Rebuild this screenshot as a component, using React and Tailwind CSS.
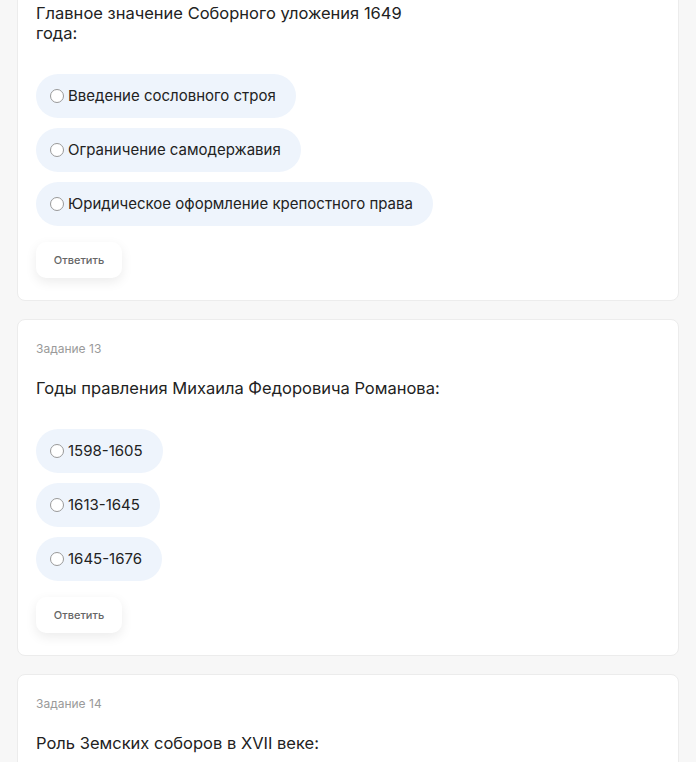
import React from "react";

const tasks = [
  {
    num: 12,
    question: ["Главное значение Соборного уложения 1649", "года:"],
    options: [
      "Введение сословного строя",
      "Ограничение самодержавия",
      "Юридическое оформление крепостного права",
    ],
  },
  {
    num: 13,
    question: ["Годы правления Михаила Федоровича Романова:"],
    options: ["1598-1605", "1613-1645", "1645-1676"],
  },
  {
    num: 14,
    question: ["Роль Земских соборов в XVII веке:"],
    options: [
      "Совещательный орган при царе",
      "Высший законодательный орган",
      "Судебная инстанция",
    ],
  },
];

const TaskCard = ({ task }) => {
  return (
    <div className="bg-white border border-[#ececec] rounded-lg px-[18px] pt-[22px] pb-[22px]">
      <p className="text-[12px] leading-[14px] text-[#9a9a9a]">
        Задание {task.num}
      </p>
      <h2 className="mt-[22px] text-[16.5px] leading-[20px] text-[#222]">
        {task.question.map((line, i) => (
          <span key={i} className="block">
            {line}
          </span>
        ))}
      </h2>
      <div className="mt-[31px] flex flex-col items-start gap-[10px]">
        {task.options.map((item, index) => (
          <label
            key={index}
            className="h-[44px] flex items-center gap-[4px] pl-[14px] pr-[20px] rounded-full bg-[#eef4fc] text-[15px] text-[#222] cursor-pointer"
          >
            <span className="w-[14px] h-[14px] rounded-full border border-[#999] bg-white" />
            <span>{item}</span>
          </label>
        ))}
      </div>
      <button className="mt-[16px] w-[86px] h-[36px] rounded-[10px] bg-white text-[11px] font-medium text-[#666] shadow-[0_4px_12px_rgba(0,0,0,0.08)]">
        Ответить
      </button>
    </div>
  );
};

export default function App() {
  return (
    <div
      className="min-h-screen bg-[#f7f7f7] px-[17px] overflow-hidden"
      style={{ fontFamily: "Inter, 'Noto Sans', sans-serif" }}
    >
      <div className="-mt-[56px] flex flex-col gap-[18px]">
        {tasks.map((task) => (
          <TaskCard key={task.num} task={task} />
        ))}
      </div>
    </div>
  );
}
